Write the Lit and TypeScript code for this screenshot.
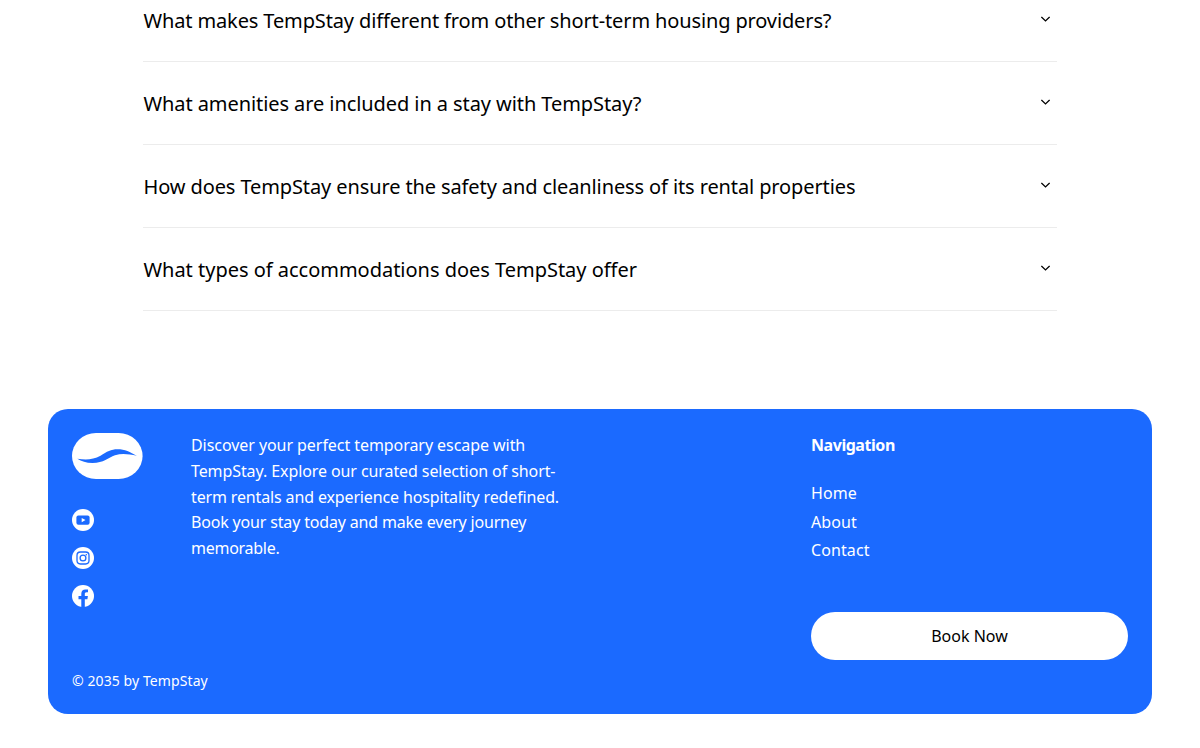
import { LitElement, css, html, svg } from 'lit';
import { styleMap } from 'lit/directives/style-map.js';

const QUESTIONS = [
  { text: 'What makes TempStay different from other short-term housing providers?', spacing: -0.13 },
  { text: 'What amenities are included in a stay with TempStay?', spacing: -0.08 },
  { text: 'How does TempStay ensure the safety and cleanliness of its rental properties', spacing: -0.11 },
  { text: 'What types of accommodations does TempStay offer', spacing: -0.02 },
];

const INTRO = [
  { text: 'Discover your perfect temporary escape with', spacing: -0.06 },
  { text: 'TempStay. Explore our curated selection of short-', spacing: -0.09 },
  { text: 'term rentals and experience hospitality redefined.', spacing: -0.14 },
  { text: 'Book your stay today and make every journey', spacing: -0.17 },
  { text: 'memorable.', spacing: -0.27 },
];

const LINKS = ['Home', 'About', 'Contact'];

const SOCIAL = [
  {
    label: 'YouTube',
    glyph: svg`
      <rect x="4.4" y="6.4" width="13.2" height="9.4" rx="2" />
      <path d="M9.7 9v4.2l3.8-2.1z" fill="#fff" />
    `,
  },
  {
    label: 'Instagram',
    glyph: svg`
      <rect x="5" y="5" width="12" height="12" rx="3.4" fill="none" stroke="#1b6aff" stroke-width="1.3" />
      <circle cx="11" cy="11" r="2.9" fill="none" stroke="#1b6aff" stroke-width="1.3" />
      <circle cx="14.3" cy="7.7" r="0.8" />
    `,
  },
  {
    label: 'Facebook',
    glyph: svg`
      <path d="M9.3 22v-7.7H6.5v-3.2h2.8V8.7c0-2.8 1.6-4.3 4.2-4.3 1.2 0 2.5.2 2.5.2v2.7h-1.4c-1.4 0-1.8.9-1.8 1.7v2.1h3.1l-.5 3.2h-2.6V22z" />
    `,
  },
];

const letterSpacing = (value: number) => styleMap({ letterSpacing: `${value}px` });

export class FaqItem extends LitElement {
  static properties = {
    question: { type: String },
    spacing: { type: Number },
  };

  static styles = css`
    :host {
      display: block;
    }

    .item {
      align-items: center;
      border-bottom: 1px solid #ececec;
      box-sizing: border-box;
      display: flex;
      height: 83px;
      justify-content: space-between;
      padding-right: 7px;
    }

    .question {
      color: #000;
      font-size: 20px;
      line-height: 28px;
      padding: 2px 0 0 0.5px;
      white-space: nowrap;
    }

    .chevron {
      height: 6px;
      margin-top: -2px;
      width: 9px;
    }
  `;

  render() {
    return html`
      <div class="item">
        <span class="question" style=${letterSpacing(this.spacing)}>${this.question}</span>
        <svg class="chevron" viewBox="0 0 9 6" fill="none" stroke="#000" stroke-width="1.3" aria-hidden="true">
          <path d="M0.4 0.9 4.5 4.9 8.6 0.9" />
        </svg>
      </div>
    `;
  }
}

customElements.define('faq-item', FaqItem);

export class SiteFooter extends LitElement {
  static styles = css`
    :host {
      display: block;
    }

    .footer {
      background: #1b6aff;
      border-radius: 20px;
      box-sizing: border-box;
      color: #fff;
      display: flex;
      flex-direction: column;
      height: 305px;
      justify-content: space-between;
      padding: 24px 24px 22px;
    }

    .columns {
      display: grid;
      grid-template-columns: 119px 620px 317px;
    }

    .logo {
      display: block;
      height: 46px;
      width: 71px;
    }

    .social {
      display: flex;
      flex-direction: column;
      gap: 16px;
      margin-top: 30px;
    }

    .social svg {
      display: block;
      height: 22px;
      width: 22px;
    }

    .intro {
      font-size: 16px;
      line-height: 25.75px;
      margin: 0;
      white-space: nowrap;
    }

    .intro span {
      display: block;
    }

    .heading {
      font-size: 16px;
      font-weight: 700;
      letter-spacing: -0.45px;
      line-height: 25px;
      margin: 0;
    }

    .links {
      display: flex;
      flex-direction: column;
      letter-spacing: 0.1px;
      line-height: 28.5px;
      margin-top: 21px;
    }

    .book {
      background: #fff;
      border-radius: 24px;
      color: #000;
      height: 48px;
      line-height: 48px;
      margin-top: 47px;
      text-align: center;
    }

    .copyright {
      font-size: 14px;
      letter-spacing: 0.09px;
      line-height: 22px;
    }
  `;

  render() {
    return html`
      <footer class="footer">
        <div class="columns">
          <div>
            <svg class="logo" viewBox="0 0 71 46" role="img" aria-label="TempStay">
              <rect width="70.6" height="46" rx="24" ry="23" fill="#fff" />
              <path
                d="M5.3 25.7C14 27.2 21 26.8 28.5 22.8C35 18.6 39 16.3 45.5 16.3C53 16.3 58 19 64.8 22.8C57 21.2 50 20 43 22.3C36 25 32 29.9 20.5 29.9C14 29.9 9.5 28.2 5.3 25.7Z"
                fill="#1b6aff"
              />
            </svg>
            <div class="social">
              ${SOCIAL.map((item) => html`
                <svg viewBox="0 0 22 22" fill="#1b6aff" role="img" aria-label=${item.label}>
                  <circle cx="11" cy="11" r="11" fill="#fff" />
                  ${item.glyph}
                </svg>
              `)}
            </div>
          </div>
          <p class="intro">
            ${INTRO.map((line) => html`<span style=${letterSpacing(line.spacing)}>${line.text}</span>`)}
          </p>
          <nav>
            <h2 class="heading">Navigation</h2>
            <div class="links">${LINKS.map((link) => html`<span>${link}</span>`)}</div>
            <div class="book">Book Now</div>
          </nav>
        </div>
        <div class="copyright">© 2035 by TempStay</div>
      </footer>
    `;
  }
}

customElements.define('site-footer', SiteFooter);

export class AppRoot extends LitElement {
  static styles = css`
    :host {
      background: #fff;
      display: block;
      font-family: 'Noto Sans', 'Open Sans', sans-serif;
      height: 748px;
      overflow: hidden;
    }

    .faq {
      margin: -21px 143px 98px;
    }

    .foot {
      margin: 0 48px;
    }
  `;

  render() {
    return html`
      <section class="faq">
        ${QUESTIONS.map((item) => html`<faq-item .question=${item.text} .spacing=${item.spacing}></faq-item>`)}
      </section>
      <site-footer class="foot"></site-footer>
    `;
  }
}

customElements.define('app-root', AppRoot);
